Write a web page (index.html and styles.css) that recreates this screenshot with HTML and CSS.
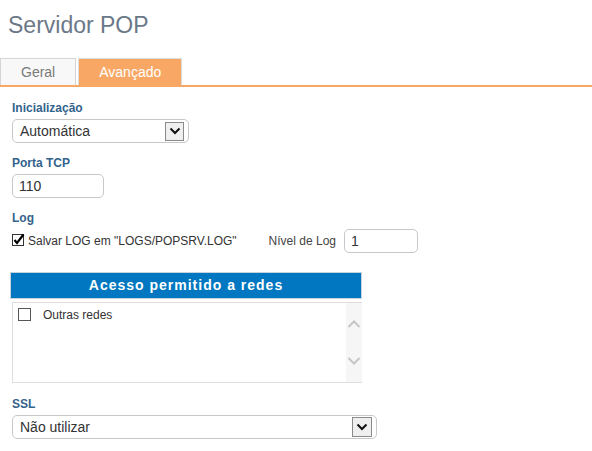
FILE: index.html
```html
<!DOCTYPE html>
<html lang="pt">
<head>
<meta charset="utf-8">
<title>Servidor POP</title>
<link rel="stylesheet" href="styles.css">
</head>
<body>
<div class="page">
  <h1 class="title">Servidor POP</h1>
  <div class="tabs">
    <div class="tab">Geral</div>
    <div class="tab active">Avançado</div>
  </div>
  <div class="form">
    <div class="group first">
      <div class="label">Inicialização</div>
      <div class="select sel-init">
        <span class="sel-text">Automática</span>
        <span class="arrow"><svg width="12" height="8" viewBox="0 0 12 8"><path d="M1.5 1.5 L6 6 L10.5 1.5" fill="none" stroke="#111" stroke-width="2"/></svg></span>
      </div>
    </div>
    <div class="group">
      <div class="label">Porta TCP</div>
      <div class="input in-port">110</div>
    </div>
    <div class="group">
      <div class="label">Log</div>
      <div class="log-row">
        <span class="check">
          <svg width="13" height="14" viewBox="0 0 13 14"><rect x="0.5" y="1.5" width="11" height="11" fill="#fff" stroke="#333"/><path d="M2.5 7 L5 10 L11.5 1.5" fill="none" stroke="#000" stroke-width="2.2"/></svg>
        </span>
        <span class="log-text">Salvar LOG em "LOGS/POPSRV.LOG"</span>
        <span class="level-label">Nível de Log</span>
        <div class="input in-level">1</div>
      </div>
    </div>
    <div class="nets">
      <div class="nets-head">Acesso permitido a redes</div>
      <div class="nets-body">
        <div class="nets-list">
          <div class="net-item"><span class="box"></span><span>Outras redes</span></div>
        </div>
        <div class="scroll">
          <svg width="14" height="8" viewBox="0 0 14 8"><path d="M1.5 7 L7 1.5 L12.5 7" fill="none" stroke="#c6c6c6" stroke-width="2"/></svg>
          <svg width="14" height="8" viewBox="0 0 14 8"><path d="M1.5 1 L7 6.5 L12.5 1" fill="none" stroke="#c6c6c6" stroke-width="2"/></svg>
        </div>
      </div>
    </div>
    <div class="group ssl">
      <div class="label">SSL</div>
      <div class="select sel-ssl">
        <span class="sel-text">Não utilizar</span>
        <span class="arrow"><svg width="12" height="8" viewBox="0 0 12 8"><path d="M1.5 1.5 L6 6 L10.5 1.5" fill="none" stroke="#111" stroke-width="2"/></svg></span>
      </div>
    </div>
  </div>
</div>
</body>
</html>
```
FILE: styles.css
```css
* { box-sizing: border-box; }
html, body { margin: 0; padding: 0; background: #fff; }
body { font-family: "Liberation Sans", Arial, sans-serif; color: #333; }

.page { width: 592px; }

.title {
  margin: 12px 0 0 8px;
  font-size: 23px;
  line-height: 26px;
  font-weight: normal;
  color: #6b7888;
}

.tabs {
  margin-top: 20px;
  display: flex;
  gap: 2px;
  border-bottom: 2px solid #f8a864;
}
.tab {
  height: 27px;
  padding: 0 20px;
  border: 1px solid #d4d4d4;
  border-bottom: none;
  background: #f8f8f8;
  color: #7a7a7a;
  font-size: 14px;
  line-height: 26px;
}
.tab.active {
  background: #f8a864;
  border-color: #dcdcdc;
  color: #fff;
}

.form { padding-left: 12px; }

.group { margin-top: 13px; }
.group.first { margin-top: 14px; }
.group.ssl { margin-top: 14px; }

.label {
  font-size: 12px;
  line-height: 14px;
  font-weight: bold;
  color: #33638c;
  margin-bottom: 4px;
}

.select {
  height: 24px;
  border: 1px solid #c8c8c8;
  border-radius: 5px;
  display: flex;
  align-items: center;
  justify-content: space-between;
  padding: 0 4px 0 7px;
  font-size: 14px;
  color: #333;
}
.sel-init { width: 177px; }
.sel-ssl { width: 365px; }
.arrow {
  width: 20px;
  height: 20px;
  border: 1px solid #8a8a8a;
  background: #efefef;
  display: flex;
  align-items: center;
  justify-content: center;
}
.sel-init .arrow { width: 19px; height: 19px; }

.input {
  height: 24px;
  border: 1px solid #c8c8c8;
  border-radius: 5px;
  font-size: 14px;
  line-height: 22px;
  color: #333;
  padding-left: 6px;
}
.in-port { width: 92px; }
.in-level { width: 74px; margin-left: 8px; }

.log-row {
  display: flex;
  align-items: center;
  height: 24px;
  font-size: 12px;
  color: #333;
}
.check { display: flex; width: 16px; height: 14px; margin-top: -2px; }
.level-label { margin-left: 32px; color: #444; }

.nets {
  margin-top: 19px;
  margin-left: -2px;
  width: 352px;
}
.nets-head {
  height: 27px;
  background: #0077c0;
  border: 1px solid #c6d3de;
  color: #fff;
  font-weight: bold;
  font-size: 14px;
  letter-spacing: 1px;
  line-height: 25px;
  text-align: center;
}
.nets-body {
  margin-top: 3px;
  margin-left: 2px;
  height: 81px;
  border: 1px solid #dedede;
  border-right: none;
  display: flex;
}
.nets-list { flex: 1; padding: 5px 0 0 5px; }
.net-item {
  display: flex;
  align-items: center;
  font-size: 12px;
  color: #333;
  height: 13px;
}
.box {
  width: 13px;
  height: 13px;
  border: 1px solid #555;
  background: #fff;
  margin-right: 12px;
}
.scroll {
  width: 16px;
  background: #f6f6f6;
  display: flex;
  flex-direction: column;
  align-items: center;
  padding-top: 17px;
  gap: 29px;
}
```
